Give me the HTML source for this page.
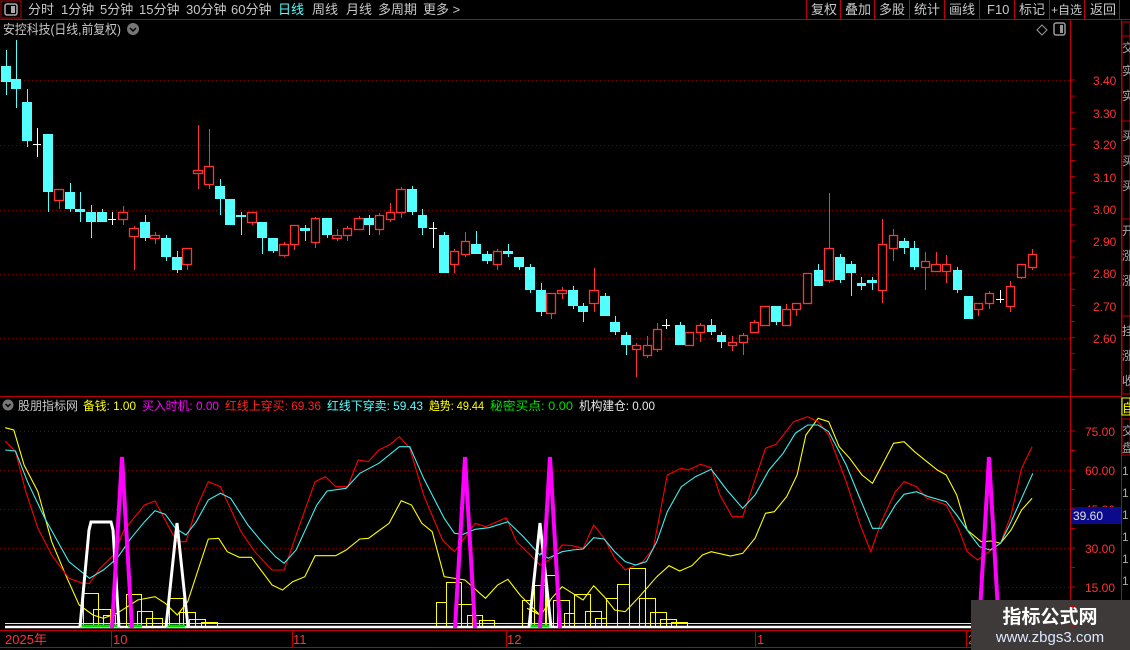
<!DOCTYPE html>
<html><head><meta charset="utf-8"><style>
html,body{margin:0;padding:0;background:#000;width:1130px;height:650px;overflow:hidden;font-family:"Liberation Sans","Noto Sans CJK SC",sans-serif;}
svg{position:absolute;left:0;top:0}
text{font-family:"Liberation Sans","Noto Sans CJK SC",sans-serif}
</style></head><body>
<svg id="s" width="1130" height="650" xmlns="http://www.w3.org/2000/svg">
<rect width="1130" height="650" fill="#000"/>
<rect x="1" y="1" width="20" height="17" fill="none" stroke="#c00000"/>
<rect x="5" y="4" width="12" height="11" rx="2" fill="none" stroke="#aaa" stroke-width="1.5"/>
<rect x="11" y="6" width="4" height="7" fill="#aaa"/>
<line x1="0" y1="19.5" x2="1130" y2="19.5" stroke="#c00000"/>
<g font-size="13" fill="#c8c8c8">
<text x="28" y="14">分时</text><text x="61" y="14">1分钟</text><text x="100" y="14">5分钟</text>
<text x="139" y="14">15分钟</text><text x="186" y="14">30分钟</text><text x="231" y="14">60分钟</text>
<text x="278" y="14" fill="#54ffff">日线</text><text x="312" y="14">周线</text><text x="346" y="14">月线</text>
<text x="378" y="14">多周期</text><text x="423" y="14">更多 &gt;</text>
<text x="811" y="14">复权</text><text x="845" y="14">叠加</text><text x="879" y="14">多股</text>
<text x="914" y="14">统计</text><text x="949" y="14">画线</text><text x="987" y="14">F10</text>
<text x="1019" y="14">标记</text><text x="1051" y="14" font-size="12">+自选</text><text x="1090" y="14">返回</text>
</g>
<g stroke="#c00000"><line x1="806.5" y1="0" x2="806.5" y2="19"/><line x1="840.5" y1="0" x2="840.5" y2="19"/><line x1="874.5" y1="0" x2="874.5" y2="19"/><line x1="909.5" y1="0" x2="909.5" y2="19"/><line x1="944.5" y1="0" x2="944.5" y2="19"/><line x1="979.5" y1="0" x2="979.5" y2="19"/><line x1="1014.5" y1="0" x2="1014.5" y2="19"/><line x1="1049.5" y1="0" x2="1049.5" y2="19"/><line x1="1084.5" y1="0" x2="1084.5" y2="19"/><line x1="1119.5" y1="0" x2="1119.5" y2="19"/></g>
<text x="3" y="34" font-size="13" fill="#c8c8c8" textLength="118" lengthAdjust="spacingAndGlyphs">安控科技(日线,前复权)</text>
<circle cx="133" cy="29" r="6" fill="#777"/><path d="M130 28 l3 3 l3 -3" stroke="#000" stroke-width="1.5" fill="none"/>
<path d="M1042 25 l5 5 l-5 5 l-5 -5z" fill="none" stroke="#999"/>
<rect x="1054" y="23" width="11" height="12" rx="2" fill="none" stroke="#999" stroke-width="1.5"/><rect x="1060" y="25" width="3" height="8" fill="#999"/>
<line x1="1070.5" y1="20" x2="1070.5" y2="647" stroke="#c00000"/>
<line x1="1121.5" y1="20" x2="1121.5" y2="650" stroke="#c00000"/>
<line x1="0" y1="396.5" x2="1121" y2="396.5" stroke="#c00000"/>
<line x1="0" y1="630.5" x2="1121" y2="630.5" stroke="#c00000"/>
<line x1="0" y1="647.5" x2="1130" y2="647.5" stroke="#c00000"/>
<g id="grid" stroke="#800000" stroke-dasharray="1 3"></g>
<g id="cand"></g>
<g font-size="12" fill="#ff3232">
<text x="1093" y="85">3.40</text><text x="1093" y="118">3.30</text><text x="1093" y="149">3.20</text><text x="1093" y="182">3.10</text><text x="1093" y="214">3.00</text><text x="1093" y="246">2.90</text><text x="1093" y="278">2.80</text><text x="1093" y="311">2.70</text><text x="1093" y="343">2.60</text>
<text x="1085" y="436">75.00</text><text x="1085" y="475">60.00</text><text x="1085" y="514">45.00</text><text x="1085" y="553">30.00</text><text x="1085" y="592">15.00</text>
</g>
<g stroke="#c00000" fill="none"><rect x="1122" y="22" width="8" height="14"/><rect x="1122" y="36" width="8" height="85"/><rect x="1122" y="121" width="8" height="98"/><rect x="1122" y="219" width="8" height="97"/><rect x="1122" y="316" width="8" height="78"/><rect x="1122" y="398" width="8" height="17" stroke="#ffff00"/><rect x="1122" y="419" width="8" height="36"/></g>
<g font-size="12" fill="#aaa"><text x="1122" y="52">交</text><text x="1122" y="75">实</text><text x="1122" y="100">实</text><text x="1122" y="140">买</text><text x="1122" y="165">买</text><text x="1122" y="190">买</text><text x="1122" y="235">开</text><text x="1122" y="260">涨</text><text x="1122" y="285">涨</text><text x="1122" y="335">挂</text><text x="1122" y="360">涨</text><text x="1122" y="385">收</text>
<text x="1122" y="412" fill="#ff0">自</text><text x="1122" y="435">交</text><text x="1122" y="452">盘</text><text x="1122" y="475">1</text><text x="1122" y="497">1</text><text x="1122" y="519">1</text><text x="1122" y="541">1</text><text x="1122" y="563">1</text><text x="1122" y="585">1</text></g>
<circle cx="8" cy="405" r="5.5" fill="#777"/><path d="M5.5 404 l2.5 2.5 l2.5 -2.5" stroke="#000" stroke-width="1.5" fill="none"/>
<g font-size="12" lengthAdjust="spacingAndGlyphs">
<text x="18" y="410" fill="#c8c8c8" textLength="60" lengthAdjust="spacingAndGlyphs">股朋指标网</text>
<text x="83" y="410" fill="#ffff00" textLength="53" lengthAdjust="spacingAndGlyphs">备钱: 1.00</text>
<text x="142" y="410" fill="#ff00ff" textLength="77" lengthAdjust="spacingAndGlyphs">买入时机: 0.00</text>
<text x="225" y="410" fill="#ff2020" textLength="96" lengthAdjust="spacingAndGlyphs">红线上穿买: 69.36</text>
<text x="327" y="410" fill="#54ffff" textLength="96" lengthAdjust="spacingAndGlyphs">红线下穿卖: 59.43</text>
<text x="429" y="410" fill="#ffff00" textLength="55" lengthAdjust="spacingAndGlyphs">趋势: 49.44</text>
<text x="490" y="410" fill="#00e000" textLength="83" lengthAdjust="spacingAndGlyphs">秘密买点: 0.00</text>
<text x="579" y="410" fill="#e8e8e8" textLength="76" lengthAdjust="spacingAndGlyphs">机构建仓: 0.00</text>
</g>
<g id="ind"></g>
<rect x="1071" y="507" width="50" height="17" fill="#0a0a8a"/>
<text x="1073" y="520" font-size="12" fill="#e0e0e0">39.60</text>
<g font-size="13" fill="#ff3232"><text x="5" y="644">2025年</text><text x="113" y="644">10</text><text x="293" y="644">11</text><text x="507" y="644">12</text><text x="757" y="644">1</text><text x="968" y="644">2</text></g>
<g stroke="#c00000"><line x1="111.5" y1="630" x2="111.5" y2="647"/><line x1="292.5" y1="630" x2="292.5" y2="647"/><line x1="506.5" y1="630" x2="506.5" y2="647"/><line x1="755.5" y1="630" x2="755.5" y2="647"/><line x1="966.5" y1="630" x2="966.5" y2="647"/></g>
<rect x="971" y="600" width="159" height="50" fill="#3e3a3a"/>
<text x="1050" y="623" font-size="19" font-weight="bold" fill="#fff" text-anchor="middle" font-family="Noto Sans CJK SC, sans-serif">指标公式网</text>
<text x="1050" y="642" font-size="15" fill="#dde8ff" text-anchor="middle">www.zbgs3.com</text>
</svg>
<script>
var NS="http://www.w3.org/2000/svg";
function el(p,t,a){var e=document.createElementNS(NS,t);for(var k in a)e.setAttribute(k,a[k]);p.appendChild(e);return e;}
var g=document.getElementById('grid');
[80,145,210,274,338].forEach(function(y){el(g,'line',{x1:0,y1:y+.5,x2:1070,y2:y+.5});});
[431,470,509,548,587].forEach(function(y){el(g,'line',{x1:0,y1:y+.5,x2:1070,y2:y+.5});});
var tk=document.getElementById('grid');
for(var y=80;y<=370;y+=16.1){el(tk.parentNode,'line',{x1:1070,y1:y,x2:1075,y2:y,stroke:'#c00000'});}
for(var y=431;y<=626;y+=19.5){el(tk.parentNode,'line',{x1:1070,y1:y,x2:1075,y2:y,stroke:'#c00000'});}
var C=[
['c',1,10,66,82,50,95],['c',11,20,79,89,40,108],['c',22,31,102,141,89,147],['w',33,41,144,144,128,157],['c',43,52,134,192,134,212],['r',54,63,189,200,189,209],['c',65,74,192,209,183,212],['c',75,84,209,212,192,222],['c',86,95,212,222,205,238],['c',97,106,212,222,209,222],['w',108,116,219,219,212,225],['r',118,127,212,219,206,225],['r',129,138,228,236,226,270],['c',140,149,222,238,215,241],['r',150,159,235,238,232,244],['c',161,170,238,257,235,261],['c',172,181,257,270,251,273],['r',182,191,248,264,248,270],['r',193,202,170,173,125,189],['r',204,213,166,184,129,189],['c',215,224,186,199,179,215],['c',225,234,199,225,199,225],['c',236,245,215,217,212,235],['r',247,256,212,222,212,225],['c',257,266,222,238,222,254],['c',268,277,238,251,238,253],['r',279,288,244,255,242,257],['r',290,298,225,244,225,250],['c',300,309,228,231,225,241],['r',311,319,218,242,217,248],['c',322,331,218,235,218,238],['r',332,341,235,238,229,241],['r',343,351,228,235,226,241],['r',354,363,218,229,216,229],['c',364,373,218,225,215,235],['r',375,383,215,229,213,235],['r',386,394,212,219,203,222],['r',396,405,189,212,187,218],['c',407,416,189,212,186,215],['c',418,426,215,228,209,235],['w',429,437,228,228,222,248],['c',439,448,235,273,232,273],['r',450,458,251,264,249,273],['r',461,469,241,254,232,257],['c',471,480,244,254,231,254],['c',482,491,254,261,251,264],['r',493,501,251,264,249,270],['c',503,512,251,254,244,257],['c',514,523,257,267,257,270],['c',525,534,267,290,264,293],['c',536,545,290,312,283,316],['r',546,555,293,313,293,319],['r',557,566,290,293,287,299],['c',568,577,290,306,286,309],['c',578,587,306,312,303,322],['r',589,598,290,303,268,312],['c',600,609,296,316,293,316],['c',610,619,322,332,316,335],['c',621,630,335,345,332,355],['r',632,640,345,349,343,377],['r',643,651,345,355,336,358],['r',653,661,329,349,323,352],['w',662,670,325,325,319,329],['c',675,684,325,345,322,345],['r',685,693,332,345,332,345],['r',696,704,325,332,323,342],['c',707,715,325,332,319,335],['c',717,725,335,342,332,348],['r',728,736,342,345,336,351],['r',739,747,335,342,333,355],['r',750,758,322,332,320,332],['r',760,769,306,325,306,325],['c',771,780,306,322,306,325],['r',782,790,309,325,304,325],['r',792,800,303,309,303,316],['r',803,811,273,303,273,303],['c',814,822,270,286,264,286],['r',824,833,248,280,193,283],['c',835,844,257,280,254,283],['c',846,855,264,273,261,296],['c',857,865,283,286,277,290],['c',867,876,280,283,277,290],['r',878,886,244,290,219,303],['r',889,897,235,248,229,261],['c',899,908,241,248,238,254],['c',910,918,248,267,241,270],['r',921,929,261,267,252,290],['r',931,940,264,271,252,271],['r',942,950,264,271,255,283],['c',953,961,270,290,267,293],['c',964,972,296,319,296,319],['r',974,982,303,309,303,316],['r',985,993,293,303,291,309],['w',996,1004,299,299,290,303],['r',1006,1014,286,306,281,312],['r',1017,1025,264,277,264,279],['r',1028,1036,254,267,249,270]];
var cg=document.getElementById('cand');
C.forEach(function(d){var t=d[0],x1=d[1],x2=d[2],bt=d[3],bb=d[4],wt=d[5],wb=d[6],mx=Math.round((x1+x2)/2)+.5;
 if(t=='w'){el(cg,'line',{x1:mx,y1:wt,x2:mx,y2:wb,stroke:'#fff'});el(cg,'line',{x1:x1,y1:bt+.5,x2:x2,y2:bt+.5,stroke:'#fff'});return;}
 var col=t=='c'?'#54ffff':'#ff3232';
 el(cg,'line',{x1:mx,y1:wt,x2:mx,y2:wb,stroke:col});
 if(t=='c')el(cg,'rect',{x:x1,y:bt,width:x2-x1+1,height:Math.max(2,bb-bt),fill:col});
 else el(cg,'rect',{x:x1+.5,y:bt+.5,width:x2-x1,height:Math.max(2,bb-bt),fill:'#000',stroke:col,'stroke-width':1.3});
});
var ig=document.getElementById('ind');
function A(l){return l.map(function(p){return (p[0]/2.904).toFixed(1)+','+(415+p[1]/3).toFixed(1)});}
function B(l){return l.map(function(p){return (520+p[0]/2.851).toFixed(1)+','+(415+p[1]/3).toFixed(1)});}
[[83,98,593],[93,110,609],[103,115,615],[126,141,594],[137,152,611],[146,162,618],[169,183,598],[179,195,612],[189,205,619],[201,217,622],[436,446,602],[446,461,582],[456,472,604],[467,482,615],[479,494,620],[522,531,600],[534,546,585],[545,557,575],[553,569,600],[564,574,613],[574,590,594],[585,601,611],[595,606,618],[606,617,598],[617,629,584],[629,645,568],[639,655,598],[650,666,612],[660,676,619],[671,687,622]].forEach(function(b){el(ig,'rect',{x:b[0]+.5,y:b[2]+.5,width:b[1]-b[0],height:626-b[2],fill:'none',stroke:'#ffff00'});});
el(ig,'line',{x1:5,y1:623.5,x2:1070,y2:623.5,stroke:'#ffff00'});
el(ig,'line',{x1:5,y1:627,x2:1070,y2:627,stroke:'#fff','stroke-width':2.5});
[[80,120],[128,142],[166,185],[530,549]].forEach(function(b){el(ig,'line',{x1:b[0],y1:626,x2:b[1],y2:626,stroke:'#00e000','stroke-width':3});});
var yA=[[15,38],[40,45],[70,150],[110,230],[150,380],[195,490],[230,570],[270,600],[300,610],[340,595],[400,555],[450,545],[480,565],[515,600],[545,560],[580,450],[605,372],[635,370],[660,410],[695,427],[730,427],[790,510],[820,525],[850,500],[885,485],[915,422],[975,422],[1005,405],[1045,372],[1070,370],[1130,325],[1165,257],[1195,270],[1225,325],[1255,350],[1290,485],[1350,495],[1410,550],[1445,510],[1475,493],[1510,540],[1568,600]];
var yB=[[20,580],[60,600],[90,550],[120,515],[150,535],[180,555],[210,512],[240,545],[270,585],[300,590],[340,545],[390,485],[425,452],[455,468],[490,452],[520,420],[545,410],[600,423],[635,415],[670,370],[700,295],[725,290],[760,245],[790,180],[815,60],[850,10],[880,20],[910,95],[940,130],[975,180],[1005,205],[1040,135],[1065,85],[1095,80],[1125,110],[1160,140],[1190,165],[1215,180],[1245,240],[1275,345],[1315,380],[1345,378],[1370,385],[1400,345],[1430,285],[1460,250]];
var rA=[[15,78],[45,110],[75,230],[110,340],[150,420],[200,490],[240,505],[260,505],[290,460],[330,420],[360,345],[420,270],[450,258],[500,355],[515,380],[540,380],[570,280],[605,200],[640,215],[700,350],[740,410],[790,465],[825,465],[870,330],[915,200],[945,185],[975,215],[1010,215],[1040,135],[1070,140],[1100,105],[1130,90],[1160,65],[1190,100],[1230,240],[1285,375],[1320,410],[1380,325],[1410,335],[1470,308],[1500,380],[1540,420],[1568,450]];
var rB=[[60,450],[90,430],[120,390],[150,392],[180,400],[210,330],[240,370],[270,430],[300,465],[350,440],[380,400],[420,180],[460,160],[480,165],[515,148],[545,158],[570,240],[605,305],[635,305],[700,100],[730,88],[780,20],[820,5],[850,20],[880,60],[930,200],[970,330],[1000,410],[1030,320],[1070,230],[1095,200],[1130,215],[1160,250],[1190,260],[1215,270],[1250,340],[1275,410],[1305,435],[1370,385],[1400,300],[1430,160],[1460,95]];
var cA=[[15,105],[45,108],[80,200],[130,310],[200,440],[260,490],[300,465],[340,430],[380,370],[420,320],[450,287],[480,298],[510,340],[540,360],[570,320],[605,255],[640,235],[670,250],[720,330],[760,380],[800,425],[825,445],[860,405],[920,270],[950,228],[1005,220],[1045,175],[1100,145],[1160,95],[1190,95],[1230,190],[1290,310],[1320,355],[1345,358],[1380,343],[1420,338],[1475,320],[1520,365],[1568,420]];
var cB=[[60,415],[80,430],[120,410],[150,405],[180,402],[210,368],[240,372],[270,410],[300,440],[330,450],[360,440],[390,380],[420,290],[460,215],[500,185],[545,163],[590,225],[635,280],[670,240],[710,165],[750,115],[785,55],[820,30],[850,30],[880,50],[930,150],[965,240],[1005,340],[1030,340],[1070,270],[1095,238],[1130,230],[1165,245],[1215,260],[1245,300],[1285,360],[1310,395],[1340,405],[1370,385],[1400,320],[1430,250],[1462,175]];
[[yA,yB,'#ffff00'],[rA,rB,'#ff0000'],[cA,cB,'#3ff0f0']].forEach(function(s){el(ig,'polyline',{points:A(s[0]).concat(B(s[1])).join(' '),fill:'none',stroke:s[2],'stroke-width':1.1});});
el(ig,'polyline',{points:'80,627 89,530 91,522 111,522 113,530 119,627',fill:'none',stroke:'#fff','stroke-width':3});
el(ig,'polyline',{points:'166,627 177,523 188,627',fill:'none',stroke:'#fff','stroke-width':3});
el(ig,'polyline',{points:'529,627 540,523 551,627',fill:'none',stroke:'#fff','stroke-width':3});
[122,465,550,989].forEach(function(x){el(ig,'polyline',{points:(x-10)+',628 '+x+',457 '+(x+10)+',628',fill:'none',stroke:'#ff00ff','stroke-width':4});});
</script>
</body></html>
